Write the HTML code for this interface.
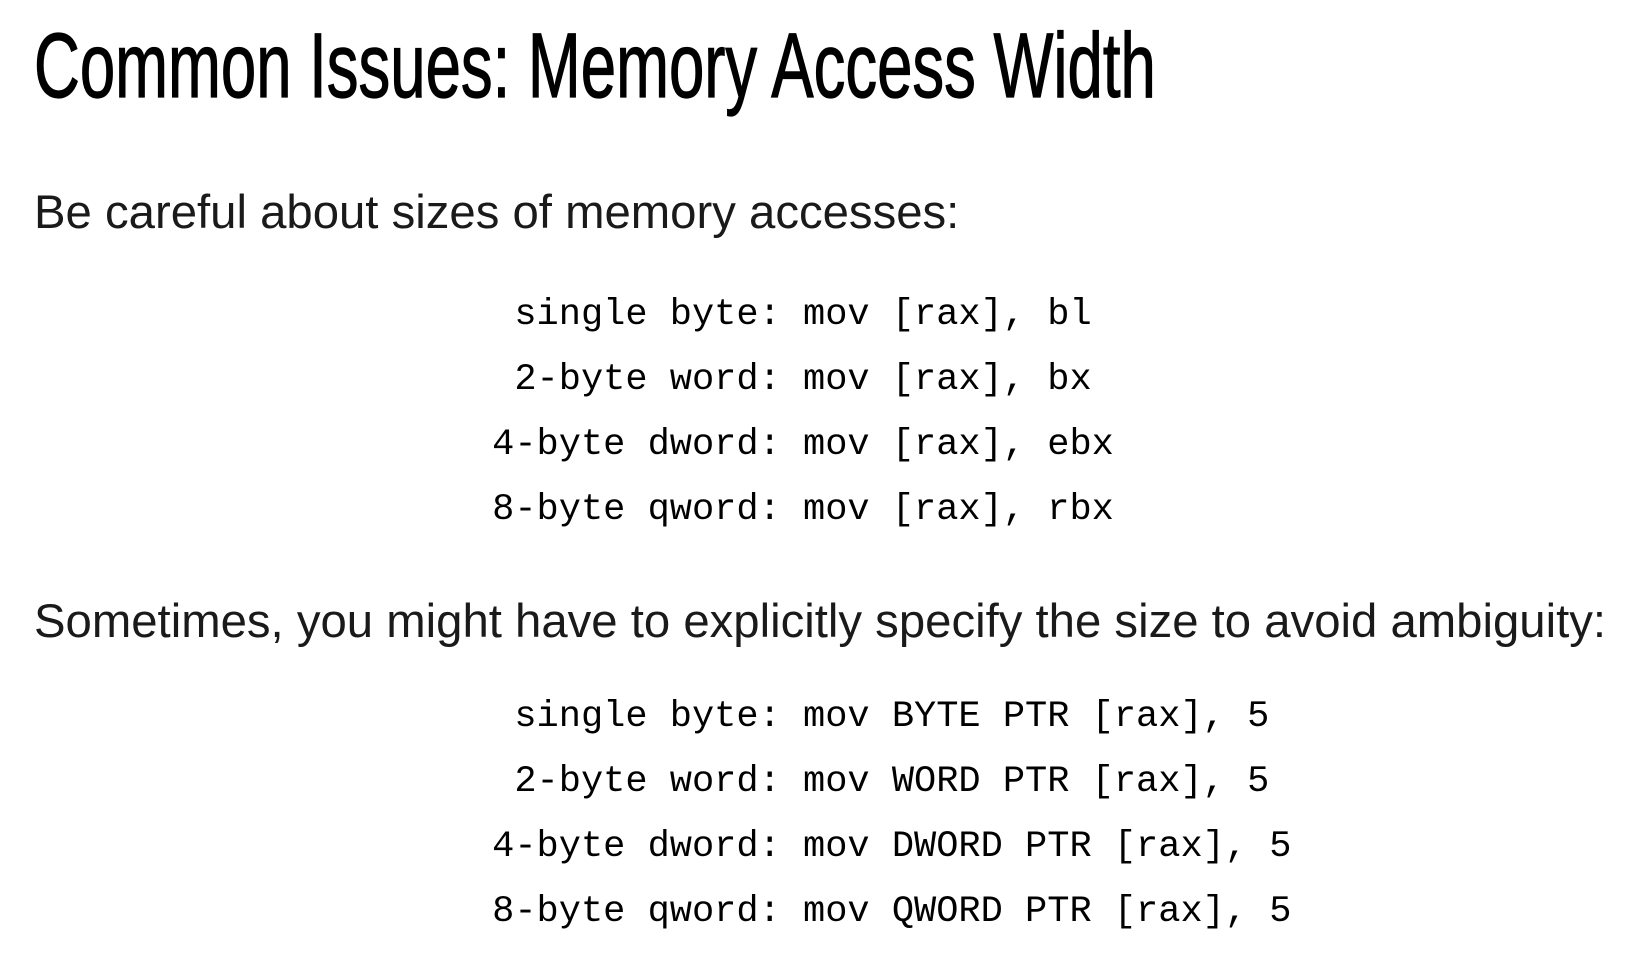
<!DOCTYPE html>
<html><head><meta charset="utf-8"><style>
html,body{margin:0;padding:0;background:#fff;}
body{width:1626px;height:959px;position:relative;overflow:hidden;color:#000;}
.t{position:absolute;left:34px;top:20px;font-family:"Liberation Sans Narrow","Liberation Sans",sans-serif;font-size:92px;line-height:92px;white-space:nowrap;transform-origin:0 0;transform:scaleX(0.69);-webkit-text-stroke:1.2px #000;}
.p{position:absolute;left:34px;font-family:"Liberation Sans",sans-serif;font-size:47.3px;line-height:47px;white-space:nowrap;color:#1a1a1a;}
.c{position:absolute;left:0;font-family:"Liberation Mono",monospace;font-size:37px;line-height:65px;white-space:pre;}
.c .l{display:inline-block;width:803px;text-align:right;}
</style></head><body>
<div class="t">Common Issues: Memory Access Width</div>
<div class="p" style="top:189px">Be careful about sizes of memory accesses:</div>
<div class="c" style="top:283px"><div><span class="l">single byte: </span>mov [rax], bl</div><div><span class="l">2-byte word: </span>mov [rax], bx</div><div><span class="l">4-byte dword: </span>mov [rax], ebx</div><div><span class="l">8-byte qword: </span>mov [rax], rbx</div></div>
<div class="p" style="top:598px">Sometimes, you might have to explicitly specify the size to avoid ambiguity:</div>
<div class="c" style="top:685px"><div><span class="l">single byte: </span>mov BYTE PTR [rax], 5</div><div><span class="l">2-byte word: </span>mov WORD PTR [rax], 5</div><div><span class="l">4-byte dword: </span>mov DWORD PTR [rax], 5</div><div><span class="l">8-byte qword: </span>mov QWORD PTR [rax], 5</div></div>
</body></html>
